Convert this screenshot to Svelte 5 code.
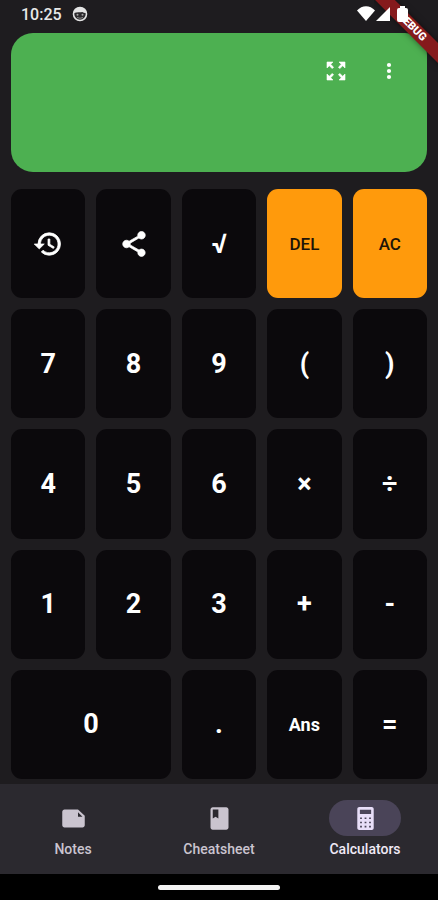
<script>
  const keys = [
    { label: 'History', icon: 'history' },
    { label: 'Share', icon: 'share' },
    { text: '√' },
    { text: 'DEL', kind: 'action' },
    { text: 'AC', kind: 'action' },
    { text: '7' }, { text: '8' }, { text: '9' }, { text: '(' }, { text: ')' },
    { text: '4' }, { text: '5' }, { text: '6' }, { text: '×' }, { text: '÷' },
    { text: '1' }, { text: '2' }, { text: '3' }, { text: '+' }, { text: '-' },
    { text: '0', kind: 'wide' },
    { text: '.' },
    { text: 'Ans', kind: 'word' },
    { text: '=' }
  ];

  const icons = {
    history: 'M13 3a9 9 0 0 0-9 9H1l3.89 3.89.07.14L9 12H6c0-3.87 3.13-7 7-7s7 3.13 7 7-3.13 7-7 7c-1.93 0-3.68-.79-4.94-2.06l-1.42 1.42A8.95 8.95 0 0 0 13 21a9 9 0 0 0 0-18zm-1 5v5l4.28 2.54.72-1.21-3.5-2.08V8H12z',
    share: 'M18 16.08c-.76 0-1.44.3-1.96.77L8.91 12.7c.05-.23.09-.46.09-.7s-.04-.47-.09-.7l7.05-4.11c.54.5 1.25.81 2.04.81 1.66 0 3-1.34 3-3s-1.34-3-3-3-3 1.34-3 3c0 .24.04.47.09.7L8.04 9.81C7.5 9.31 6.79 9 6 9c-1.66 0-3 1.34-3 3s1.34 3 3 3c.79 0 1.5-.31 2.04-.81l7.12 4.16c-.05.21-.08.43-.08.65 0 1.61 1.31 2.92 2.92 2.92s2.92-1.31 2.92-2.92-1.31-2.92-2.92-2.92z'
  };

  const tabs = [
    { name: 'Notes', path: 'M16 4H4c-1.1 0-2 .9-2 2v12c0 1.1.9 2 2 2h16c1.1 0 2-.9 2-2v-8.500zM16 6.500l4 4h-4z' },
    { name: 'Cheatsheet', path: 'M18 2H6c-1.1 0-2 .9-2 2v16c0 1.1.9 2 2 2h12c1.1 0 2-.9 2-2V4c0-1.1-.9-2-2-2zM6 4h5v8l-2.5-1.5L6 12V4z' },
    {
      name: 'Calculators',
      path: 'M6.500 1.800h11c1 0 1.800.8 1.800 1.800v16.800c0 1-.8 1.800-1.800 1.800h-11c-1 0-1.800-.8-1.800-1.800V3.600c0-1 .8-1.800 1.800-1.800zM7 4.300v3.700h10V4.300zM7.200 11v1.500h1.600V11zM11.200 11v1.500h1.600V11zM15.200 11v1.500h1.600V11zM7.200 14.800v1.500h1.600v-1.500zM11.200 14.800v1.500h1.600v-1.500zM15.200 14.800v1.500h1.600v-1.500zM7.200 18.400v1.500h1.600v-1.500zM11.200 18.400v1.500h1.600v-1.500zM15.200 18.400v1.500h1.600v-1.500z'
    }
  ];

  let current = $state('Calculators');
</script>

<div class="app">
  <div class="ribbon-corner"><span class="ribbon">DEBUG</span></div>

  <header class="status">
    <span class="clock">10:25</span>
    <svg width="16" height="16" viewBox="0 0 16 16" aria-hidden="true">
      <circle cx="8" cy="8" r="6.5" fill="#2c2a2d" stroke="#e4e4e4" stroke-width="1.6" />
      <path d="M2 7C2 3 5 1.500 8 1.500S14 3 14 7C12.500 7 11.500 6.700 10.500 6 8 6.500 5 6 2 7z" fill="#e4e4e4" />
      <circle cx="5.500" cy="8.800" r="1" fill="#a8a8a8" />
      <circle cx="10.500" cy="8.800" r="1" fill="#a8a8a8" />
      <path d="M5 11.500q3 1.500 6 0" fill="none" stroke="#8a8a8a" />
    </svg>
    <svg class="signals" width="52" height="18" viewBox="0 0 52 18" fill="#fff" aria-hidden="true">
      <path d="M0 5.500C5-.2 13-.2 18 5.500L9 16z" />
      <path d="M33 2v14H19z" />
      <path d="M43 1h5v2h1q2 0 2 2v10q0 2-2 2h-7q-2 0-2-2V5q0-2 2-2h1z" />
    </svg>
  </header>

  <main>
    <section class="display" aria-label="Display">
      <button aria-label="Expand">
        <svg class="heavy" width="24" height="24" viewBox="0 0 24 24"><path d="M15 3l2.3 2.3-2.89 2.87 1.42 1.42L18.7 6.7 21 9V3zM3 9l2.3-2.3 2.87 2.89 1.42-1.42L6.7 5.3 9 3H3zm6 12l-2.3-2.3 2.89-2.87-1.42-1.42L5.3 17.3 3 15v6zm12-6l-2.3 2.3-2.87-2.89-1.42 1.42 2.89 2.87L15 21h6z" /></svg>
      </button>
      <button aria-label="More options">
        <svg width="24" height="24" viewBox="0 0 24 24" fill="#fff"><circle cx="12" cy="6" r="2.1" /><circle cx="12" cy="12" r="2.1" /><circle cx="12" cy="18" r="2.1" /></svg>
      </button>
    </section>

    <section class="keypad" aria-label="Keypad">
      {#each keys as key}
        <button class="key {key.kind ?? ''}" aria-label={key.label}>
          {#if key.icon}
            <svg class="heavy" width="30" height="30" viewBox="0 0 24 24"><path d={icons[key.icon]} /></svg>
          {:else}
            {key.text}
          {/if}
        </button>
      {/each}
    </section>
  </main>

  <nav>
    {#each tabs as tab}
      <button class="tab" class:active={current === tab.name} onclick={() => (current = tab.name)}>
        <span class="indicator">
          <svg width="27" height="27" viewBox="0 0 24 24" fill="currentColor" fill-rule="evenodd" aria-hidden="true"><path d={tab.path} /></svg>
        </span>
        <span>{tab.name}</span>
      </button>
    {/each}
  </nav>

  <footer><span class="handle"></span></footer>
</div>

<style>
  :global(body) {
    margin: 0;
    background: #1e1c1f;
  }
  .app {
    position: relative;
    display: flex;
    flex-direction: column;
    min-height: 100vh;
    background: #1e1c1f;
    color: #fff;
    font-family: Roboto, sans-serif;
  }
  button {
    border: 0;
    padding: 0;
    margin: 0;
    background: none;
    color: inherit;
    font: inherit;
    cursor: pointer;
  }
  svg {
    display: block;
  }
  .heavy {
    overflow: visible;
    fill: #fff;
    stroke: #fff;
    stroke-width: 0.6;
  }
  .status {
    position: relative;
    z-index: 2;
    display: flex;
    align-items: center;
    gap: 10px;
    height: 28px;
    padding: 0 29px 0 21px;
  }
  .clock {
    font-size: 16px;
    font-weight: 500;
    color: #e8e8e8;
  }
  .signals {
    margin-left: auto;
  }
  .ribbon-corner {
    position: absolute;
    z-index: 1;
    top: 0;
    right: 0;
    width: 64px;
    height: 72px;
    overflow: hidden;
  }
  .ribbon {
    position: absolute;
    top: 20px;
    left: -22px;
    width: 120px;
    height: 14px;
    background: #851a1c;
    box-shadow: 0 0 6px rgba(0, 0, 0, 0.5);
    font-size: 11px;
    font-weight: 900;
    line-height: 14px;
    text-align: center;
    transform: rotate(45deg);
  }
  main {
    flex: 1;
    display: flex;
    flex-direction: column;
    gap: 17px;
    padding: 5px 11px;
  }
  .display {
    display: flex;
    justify-content: flex-end;
    align-items: flex-start;
    box-sizing: border-box;
    height: 139px;
    padding: 11px 12px;
    border-radius: 22px;
    background: #4db051;
  }
  .display button {
    display: grid;
    place-items: center;
    width: 53px;
    height: 53px;
  }
  .keypad {
    flex: 1;
    display: grid;
    grid-template-columns: repeat(5, 1fr);
    grid-auto-rows: 1fr;
    gap: 11px;
  }
  .key {
    display: grid;
    place-items: center;
    border-radius: 11px;
    background: #0b090c;
    font-size: 27px;
    font-weight: 700;
  }
  .wide {
    grid-column: span 2;
  }
  .word {
    font-size: 18px;
  }
  .action {
    background: #ff9a0c;
    color: #1e1408;
    font-size: 17px;
    font-weight: 500;
  }
  nav {
    display: grid;
    grid-template-columns: repeat(3, 1fr);
    height: 90px;
    background: #2b292f;
  }
  .tab {
    display: flex;
    flex-direction: column;
    align-items: center;
    justify-content: center;
    gap: 4px;
    color: #cac4cf;
    font-size: 14px;
    font-weight: 500;
    line-height: 18px;
  }
  .indicator {
    display: grid;
    place-items: center;
    width: 72px;
    height: 36px;
    border-radius: 18px;
  }
  .active {
    color: #f0eaf6;
  }
  .active .indicator {
    background: #4a4458;
    color: #e8def8;
  }
  footer {
    display: grid;
    place-items: center;
    height: 26px;
    background: #000;
  }
  .handle {
    width: 122px;
    height: 5px;
    border-radius: 3px;
    background: #f4f4f4;
  }
</style>
